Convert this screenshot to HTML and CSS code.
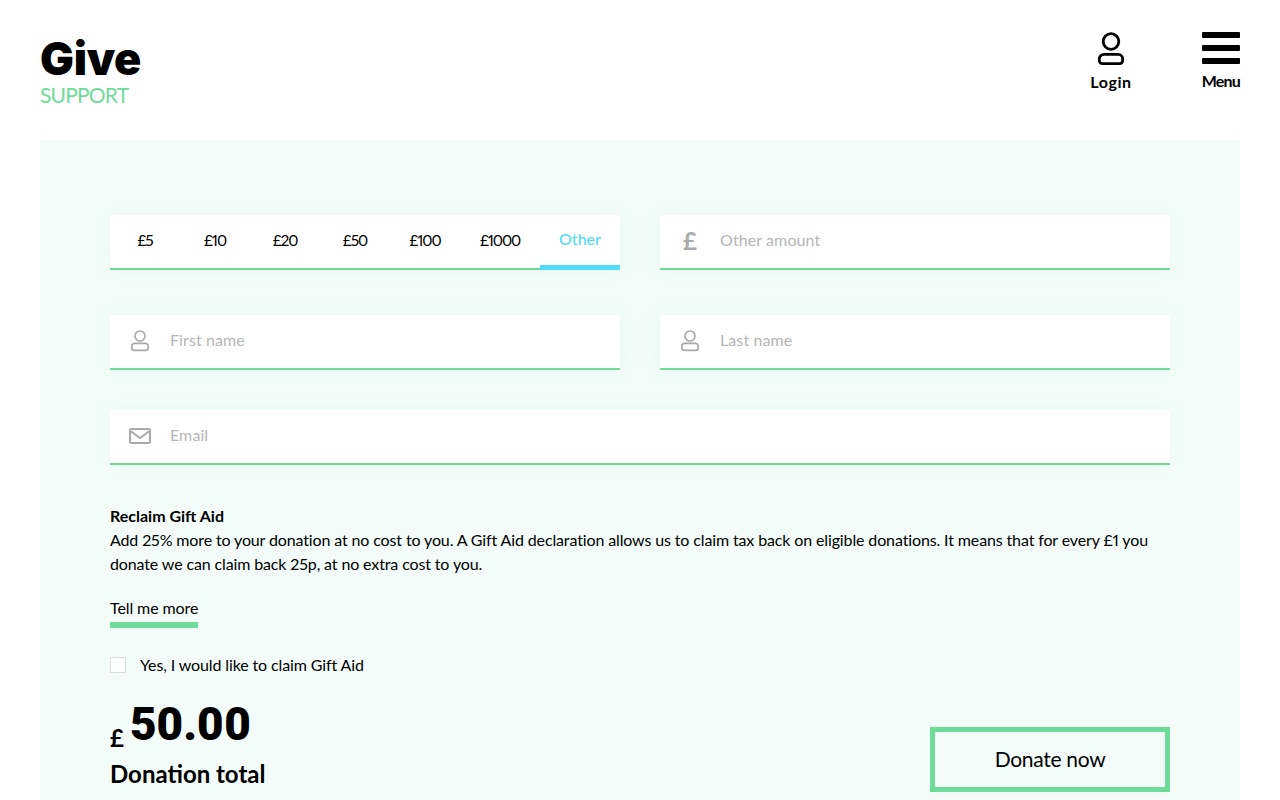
FILE: index.html
```html
<!DOCTYPE html>
<html lang="en">
<head>
<meta charset="utf-8">
<title>Give Support</title>
<link rel="stylesheet" href="styles.css">
</head>
<body>
<header class="site-header">
  <div class="brand">
    <div class="brand-name">Give</div>
    <div class="brand-sub">SUPPORT</div>
  </div>
  <nav class="nav">
    <a class="nav-item login">
      <svg class="nav-icon" width="30" height="34" viewBox="0 0 30 34" fill="none" stroke="#000" stroke-width="2.8"><circle cx="15" cy="9.5" r="7.8"/><path d="M8 22.3h14a4.7 4.7 0 0 1 4.7 4.7v1.6a3 3 0 0 1-3 3H6.3a3 3 0 0 1-3-3V27a4.7 4.7 0 0 1 4.7-4.7z"/></svg>
      <span class="login-text">Login</span>
    </a>
    <a class="nav-item menu">
      <span class="bars"><i></i><i></i><i></i></span>
      <span class="menu-text">Menu</span>
    </a>
  </nav>
</header>
<main class="panel">
  <div class="row">
    <div class="amounts">
      <span class="amt">£5</span><span class="amt">£10</span><span class="amt">£20</span><span class="amt">£50</span><span class="amt">£100</span><span class="amt big">£1000</span><span class="amt big active">Other</span>
    </div>
    <div class="field">
      <span class="icon pound">£</span>
      <span class="ph">Other amount</span>
    </div>
  </div>
  <div class="row">
    <div class="field">
      <span class="icon"><svg class="glyph" width="20" height="22" viewBox="0 0 20 22" fill="none" stroke="#aaa" stroke-width="1.7"><circle cx="10" cy="6" r="5"/><path d="M5 13.4h10a3.2 3.2 0 0 1 3.2 3.2v1.4a2.3 2.3 0 0 1-2.3 2.3H4.1A2.3 2.3 0 0 1 1.8 18v-1.4A3.2 3.2 0 0 1 5 13.4z"/></svg></span>
      <span class="ph">First name</span>
    </div>
    <div class="field">
      <span class="icon"><svg class="glyph" width="20" height="22" viewBox="0 0 20 22" fill="none" stroke="#aaa" stroke-width="1.7"><circle cx="10" cy="6" r="5"/><path d="M5 13.4h10a3.2 3.2 0 0 1 3.2 3.2v1.4a2.3 2.3 0 0 1-2.3 2.3H4.1A2.3 2.3 0 0 1 1.8 18v-1.4A3.2 3.2 0 0 1 5 13.4z"/></svg></span>
      <span class="ph">Last name</span>
    </div>
  </div>
  <div class="field wide">
    <span class="icon"><svg class="glyph" width="22" height="16" viewBox="0 0 22 16" fill="none" stroke="#aaa" stroke-width="2.1"><rect x="1" y="1" width="20" height="14" rx="1.5"/><path d="M1.5 3 11 10l9.5-7"/></svg></span>
    <span class="ph">Email</span>
  </div>
  <section class="gift">
    <h2 class="gift-title">Reclaim Gift Aid</h2>
    <p class="gift-text">Add 25% more to your donation at no cost to you. A Gift Aid declaration allows us to claim tax back on eligible donations. It means that for every £1 you donate we can claim back 25p, at no extra cost to you.</p>
    <a class="more">Tell me more</a>
    <label class="check"><span class="box"></span>Yes, I would like to claim Gift Aid</label>
  </section>
  <div class="foot">
    <div class="total">
      <div class="sum"><span class="cur">£</span><span class="val">50.00</span></div>
      <div class="total-label">Donation total</div>
    </div>
    <button class="donate">Donate now</button>
  </div>
</main>
</body>
</html>
```
FILE: styles.css
```css
* { box-sizing: border-box; }
html, body { margin: 0; height: 800px; overflow: hidden; background: #fff; }
body { font-family: Lato, sans-serif; color: #000; font-size: 16px; font-variant-numeric: proportional-nums; }

.site-header { height: 140px; padding: 0 40px; display: flex; justify-content: space-between; }
.brand { padding-top: 33px; }
.brand-name { font-family: Inter, sans-serif; font-weight: 900; font-size: 45px; line-height: 52px; letter-spacing: -0.3px; }
.brand-sub { color: #6fdb98; font-size: 21px; line-height: 20px; letter-spacing: -0.8px; }
.nav { display: flex; gap: 70px; padding-top: 32px; }
.nav-item { display: flex; flex-direction: column; align-items: center; font-weight: 700; font-size: 16px; line-height: 20px; }
.login-text { letter-spacing: .6px; }
.menu-text { letter-spacing: -.8px; }
.nav-icon { margin-bottom: 6px; }
.bars { display: flex; flex-direction: column; gap: 7px; width: 38px; margin-bottom: 7px; }
.bars i { display: block; height: 6px; background: #000; border-radius: 1px; }

.panel { width: 1200px; margin: 0 40px; height: 660px; padding: 75px 70px 0; background: #f3fcf9; }
.row { display: flex; gap: 40px; margin-bottom: 45px; }
.row:nth-child(2) { margin-bottom: 40px; }
.amounts, .field { width: 510px; height: 55px; background: #fff; border-bottom: 2px solid #6fdb98; box-shadow: 0 0 12px rgba(220,240,232,.35); }
.amounts { display: flex; }
.amt { width: 70px; height: 55px; display: flex; align-items: center; justify-content: center; padding-bottom: 6px; font-size: 15.5px; letter-spacing: -1.1px; }
.amt.big { width: 80px; }
.amt.active { color: #4fdcfb; border-bottom: 5px solid #4fdcfb; padding-bottom: 4px; font-size: 16px; font-weight: 500; letter-spacing: 0; }
.field { display: flex; align-items: center; padding-bottom: 5px; }
.field.wide { width: 1060px; }
.icon { width: 60px; display: flex; justify-content: center; color: #aaa; }
.icon.pound { font-size: 24px; font-weight: 700; padding-top: 3px; }
.glyph { margin-top: 4px; }
.ph { color: #b5b5b5; letter-spacing: .1px; }

.gift { margin-top: 39px; }
.gift-title { margin: 0; font-size: 16px; font-weight: 700; line-height: 24px; }
.gift-text { margin: 0; line-height: 24px; width: 1060px; letter-spacing: -0.13px; }
.more { display: inline-block; margin-top: 20px; line-height: 24px; border-bottom: 6px solid #6fdb98; padding-bottom: 2px; letter-spacing: -.1px; }
.check { display: flex; align-items: center; margin-top: 25px; line-height: 24px; letter-spacing: -.12px; }
.box { width: 16px; height: 16px; margin-right: 14px; border: 1px solid #ddd; background: #fbfefd; }

.foot { display: flex; justify-content: space-between; align-items: flex-start; margin-top: 17px; }
.sum { display: flex; align-items: flex-end; height: 60px; }
.cur { font-size: 24px; font-weight: 700; line-height: 32px; margin-right: 6px; }
.val { font-family: Roboto, sans-serif; font-size: 46px; font-weight: 900; line-height: 60px; letter-spacing: -.5px; }
.total-label { font-size: 24px; font-weight: 700; line-height: 30px; margin-top: 5px; }
.donate { width: 240px; height: 65px; margin-top: 33px; background: transparent; border: 5px solid #6fdb98; font: 400 21px Lato, sans-serif; letter-spacing: -.3px; color: #000; padding: 0 0 3px; }
```
